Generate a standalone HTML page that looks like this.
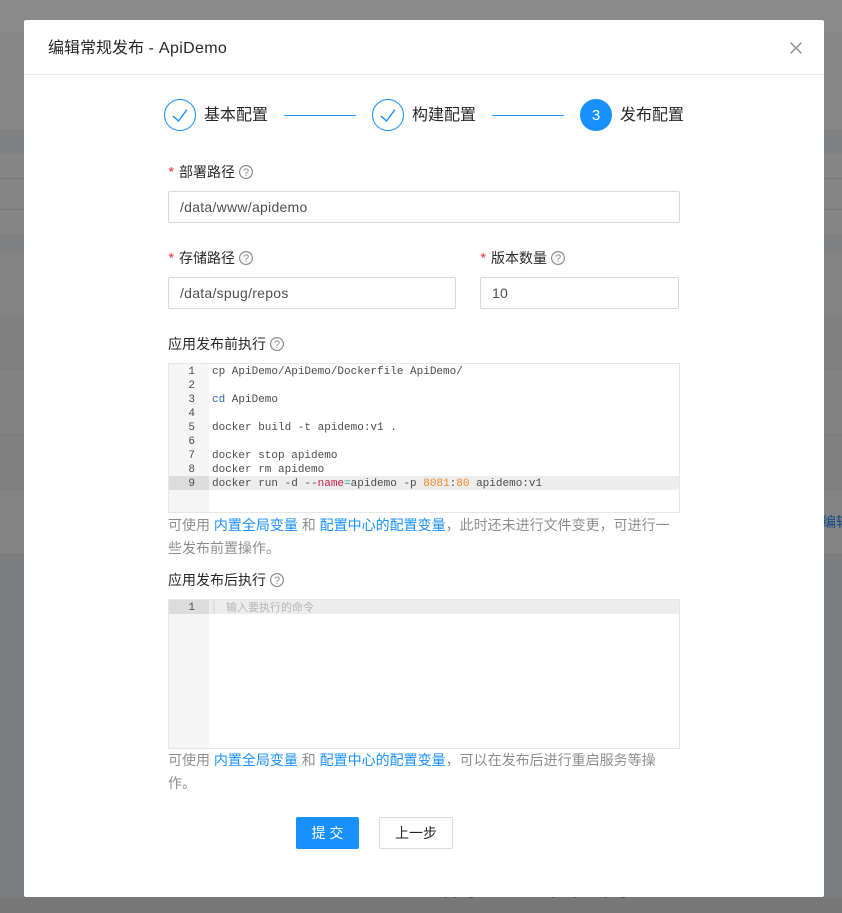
<!DOCTYPE html>
<html lang="zh">
<head>
<meta charset="utf-8">
<style>
html,body{margin:0;padding:0}
body{width:842px;height:913px;overflow:hidden;position:relative;background:#8a8a8a;font-family:"Liberation Sans","Noto Sans CJK SC",sans-serif;font-size:14px;color:rgba(0,0,0,.85)}
.a{position:absolute;white-space:nowrap}
.band{position:absolute;left:0;width:842px}
.modal{position:absolute;left:24px;top:20px;width:800px;height:877px;background:#fff;border-radius:2px}
.line{position:absolute;height:1px;background:#1890ff;top:115px;width:72px}
.circ{position:absolute;top:99px;width:32px;height:32px;box-sizing:border-box;border-radius:50%;border:1px solid #1890ff}
.st{position:absolute;top:104px;font-size:16px;line-height:24px;white-space:nowrap;color:rgba(0,0,0,.85)}
.lab{position:absolute;line-height:22px;white-space:nowrap;color:rgba(0,0,0,.85)}
.req{display:inline-block;width:11px;color:#f5222d;font-family:"Liberation Mono",monospace;position:relative;left:-1px}
.q{display:inline-block;vertical-align:-2px;margin-left:4px}
.inp{position:absolute;box-sizing:border-box;height:32px;border:1px solid #d9d9d9;border-radius:2px;padding:0 11px;line-height:30px;color:rgba(0,0,0,.7);background:#fff;letter-spacing:.27px}
.ed{position:absolute;left:168px;width:512px;height:150px;box-sizing:border-box;border:1px solid #e6e6e6;background:#fff;overflow:hidden}
.gut{position:absolute;left:0;top:0;width:40px;height:100%;background:#f5f5f5}
.row{position:absolute;left:0;width:100%;height:14px;font:11px/14px "Liberation Mono",monospace;color:#4d4d4d;white-space:pre}
.row b{font-weight:normal;position:absolute;left:0;width:26px;text-align:right;top:1px}
.row span.c{position:absolute;left:43px;top:1px}
.act{background:#ededed}
.act i{position:absolute;left:0;top:0;width:40px;height:14px;background:#dcdcdc}
.help{position:absolute;left:168px;width:512px;line-height:23px;color:rgba(0,0,0,.45)}
.help a{color:#1890ff;text-decoration:none}
.btn{position:absolute;top:817px;height:32px;box-sizing:border-box;border-radius:2px;text-align:center;line-height:30px}
.tick{position:absolute;top:897px;width:2px;height:1px;background:#555}
</style>
</head>
<body>
<div class="band" style="top:0;height:32px;background:#8a8a8a"></div>
<div class="band" style="top:32px;height:1px;background:#858585"></div>
<div class="band" style="top:33px;height:96px;background:#878787"></div>
<div class="band" style="top:129px;height:24px;background:#7f8081"></div>
<div class="band" style="top:153px;height:25px;background:#858585"></div>
<div class="band" style="top:178px;height:1px;background:#777"></div>
<div class="band" style="top:179px;height:30px;background:#858585"></div>
<div class="band" style="top:209px;height:1px;background:#777"></div>
<div class="band" style="top:210px;height:24px;background:#858585"></div>
<div class="band" style="top:234px;height:17px;background:#7f8081"></div>
<div class="band" style="top:251px;height:64px;background:#838383"></div>
<div class="band" style="top:315px;height:54px;background:#808080"></div>
<div class="band" style="top:369px;height:1px;background:#7b7b7b"></div>
<div class="band" style="top:370px;height:64px;background:#828282"></div>
<div class="band" style="top:434px;height:1px;background:#7b7b7b"></div>
<div class="band" style="top:435px;height:54px;background:#808080"></div>
<div class="band" style="top:489px;height:1px;background:#7b7b7b"></div>
<div class="band" style="top:490px;height:63px;background:#838383"></div>
<div class="band" style="top:553px;height:344px;background:#7c7d7e"></div>
<div class="band" style="top:897px;height:16px;background:#787878"></div>
<div class="a" style="left:822px;top:512px;line-height:20px;color:#0f4c8a">编辑</div>
<div class="tick" style="left:445px"></div><div class="tick" style="left:454px"></div><div class="tick" style="left:469px;width:4px"></div><div class="tick" style="left:552px"></div><div class="tick" style="left:574px"></div><div class="tick" style="left:605px"></div><div class="tick" style="left:621px;width:4px"></div>

<div class="modal"></div>
<div class="a" style="left:24px;top:74px;width:800px;height:1px;background:#e8e8e8"></div>
<div class="a" style="left:48px;font-size:16px;line-height:24px;top:37px">编辑常规发布 <span style="letter-spacing:.35px">- ApiDemo</span></div>
<svg class="a" style="left:789px;top:41px" width="14" height="14" viewBox="0 0 14 14"><path d="M1.5 1.5L12.5 12.5M12.5 1.5L1.5 12.5" stroke="#8c8c8c" stroke-width="1.3" fill="none"/></svg>

<div class="circ" style="left:164px"></div>
<svg class="a" style="left:164px;top:99px" width="32" height="32" viewBox="0 0 32 32"><path d="M9 17L14.5 22L23 10.5" stroke="#1890ff" stroke-width="1.4" fill="none"/></svg>
<div class="st" style="left:204px">基本配置</div>
<div class="line" style="left:284px"></div>
<div class="circ" style="left:372px"></div>
<svg class="a" style="left:372px;top:99px" width="32" height="32" viewBox="0 0 32 32"><path d="M9 17L14.5 22L23 10.5" stroke="#1890ff" stroke-width="1.4" fill="none"/></svg>
<div class="st" style="left:412px">构建配置</div>
<div class="line" style="left:492px"></div>
<div class="circ" style="left:580px;background:#1890ff;color:#fff;text-align:center;font-size:15px;line-height:32px">3</div>
<div class="st" style="left:620px">发布配置</div>

<div class="lab" style="left:168px;top:161px"><span class="req">*</span>部署路径<svg class="q" width="14" height="14" viewBox="0 0 14 14"><circle cx="7" cy="7" r="6.4" fill="none" stroke="#8c8c8c" stroke-width="1.2"/><text x="7" y="11" font-size="11" text-anchor="middle" fill="#8c8c8c" font-family="Liberation Sans">?</text></svg></div>
<div class="inp" style="left:168px;top:191px;width:512px">/data/www/apidemo</div>

<div class="lab" style="left:168px;top:247px"><span class="req">*</span>存储路径<svg class="q" width="14" height="14" viewBox="0 0 14 14"><circle cx="7" cy="7" r="6.4" fill="none" stroke="#8c8c8c" stroke-width="1.2"/><text x="7" y="11" font-size="11" text-anchor="middle" fill="#8c8c8c" font-family="Liberation Sans">?</text></svg></div>
<div class="inp" style="left:168px;top:277px;width:288px">/data/spug/repos</div>

<div class="lab" style="left:480px;top:247px"><span class="req">*</span>版本数量<svg class="q" width="14" height="14" viewBox="0 0 14 14"><circle cx="7" cy="7" r="6.4" fill="none" stroke="#8c8c8c" stroke-width="1.2"/><text x="7" y="11" font-size="11" text-anchor="middle" fill="#8c8c8c" font-family="Liberation Sans">?</text></svg></div>
<div class="inp" style="left:480px;top:277px;width:199px">10</div>

<div class="lab" style="left:168px;top:333px">应用发布前执行<svg class="q" width="14" height="14" viewBox="0 0 14 14"><circle cx="7" cy="7" r="6.4" fill="none" stroke="#8c8c8c" stroke-width="1.2"/><text x="7" y="11" font-size="11" text-anchor="middle" fill="#8c8c8c" font-family="Liberation Sans">?</text></svg></div>
<div class="ed" style="top:363px">
<div class="gut"></div>
<div class="row" style="top:0"><b>1</b><span class="c">cp ApiDemo/ApiDemo/Dockerfile ApiDemo/</span></div>
<div class="row" style="top:14px"><b>2</b></div>
<div class="row" style="top:28px"><b>3</b><span class="c"><span style="color:#2a6aa8">cd</span> ApiDemo</span></div>
<div class="row" style="top:42px"><b>4</b></div>
<div class="row" style="top:56px"><b>5</b><span class="c">docker build -t apidemo:v1 .</span></div>
<div class="row" style="top:70px"><b>6</b></div>
<div class="row" style="top:84px"><b>7</b><span class="c">docker stop apidemo</span></div>
<div class="row" style="top:98px"><b>8</b><span class="c">docker rm apidemo</span></div>
<div class="row act" style="top:112px"><i></i><b>9</b><span class="c">docker run -d --<span style="color:#c7254e">name</span><span style="color:#2a9d8f">=</span>apidemo -p <span style="color:#f5872b">8081</span>:<span style="color:#f5872b">80</span> apidemo:v1</span></div>
</div>
<div class="help" style="top:514px">可使用 <a>内置全局变量</a> 和 <a>配置中心的配置变量</a>，此时还未进行文件变更，可进行一些发布前置操作。</div>

<div class="lab" style="left:168px;top:569px">应用发布后执行<svg class="q" width="14" height="14" viewBox="0 0 14 14"><circle cx="7" cy="7" r="6.4" fill="none" stroke="#8c8c8c" stroke-width="1.2"/><text x="7" y="11" font-size="11" text-anchor="middle" fill="#8c8c8c" font-family="Liberation Sans">?</text></svg></div>
<div class="ed" style="top:599px">
<div class="gut"></div>
<div class="row act" style="top:0"><i></i><b>1</b><span class="c" style="left:57px;font-family:'Noto Sans CJK SC',sans-serif;font-size:11px;top:0;color:#b5b5b5">输入要执行的命令</span><span style="position:absolute;left:44px;top:0;width:2px;height:14px;background:#e0e0e0"></span></div>
</div>
<div class="help" style="top:749px">可使用 <a>内置全局变量</a> 和 <a>配置中心的配置变量</a>，可以在发布后进行重启服务等操作。</div>

<div class="btn" style="left:296px;width:63px;background:#1890ff;color:#fff;line-height:32px">提 交</div>
<div class="btn" style="left:379px;width:74px;background:#fff;border:1px solid #d9d9d9;color:rgba(0,0,0,.85)">上一步</div>
</body>
</html>
